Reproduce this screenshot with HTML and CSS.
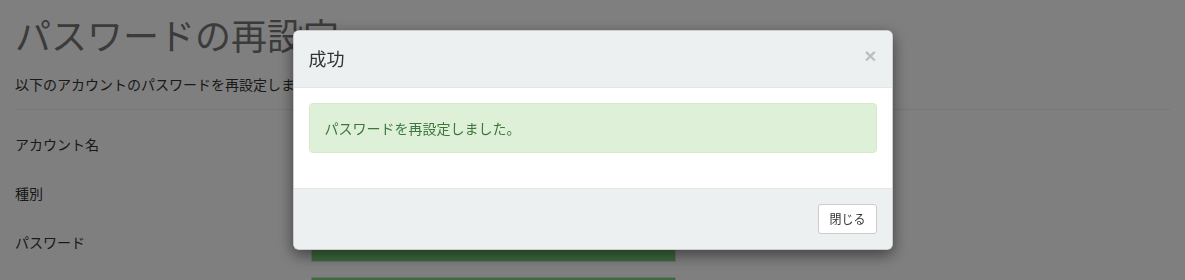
FILE: index.html
```html
<!DOCTYPE html>
<html lang="ja">
<head>
<meta charset="utf-8">
<title>パスワードの再設定</title>
<link rel="stylesheet" href="styles.css">
</head>
<body>
<div class="page">
  <h1 class="title">パスワードの再設定</h1>
  <p class="lead">以下のアカウントのパスワードを再設定しました。</p>
  <hr class="divider">
  <div class="form">
    <div class="label">アカウント名</div>
    <div class="value"></div>
    <div class="label">種別</div>
    <div class="value"></div>
    <div class="label">パスワード</div>
    <div class="value green"></div>
    <div class="label">&nbsp;</div>
    <div class="value green"></div>
  </div>
</div>

<div class="backdrop"></div>
<div class="modal">
  <div class="dialog">
    <div class="header">
      <h4 class="modal-title">成功</h4>
      <button class="close" type="button">×</button>
    </div>
    <div class="body">
      <div class="alert">パスワードを再設定しました。</div>
    </div>
    <div class="footer">
      <button class="btn" type="button">閉じる</button>
    </div>
  </div>
</div>
</body>
</html>
```
FILE: styles.css
```css
* { box-sizing: border-box; }
html, body {
  margin: 0;
  padding: 0;
  background: #fff;
  font-family: "Noto Sans CJK JP", "Noto Sans", sans-serif;
  font-size: 14px;
  line-height: 1.42857;
  color: #333;
}
.page {
  padding: 0 15px;
  height: 280px;
  overflow: hidden;
}
.title {
  margin: 15px 0 0;
  font-size: 36px;
  line-height: 1.1;
  font-weight: 400;
  color: #777;
}
.lead {
  margin: 19px 0 0;
}
.divider {
  margin: 15px 0 20px;
  border: 0;
  border-top: 1px solid #eee;
}
.form {
  display: grid;
  grid-template-columns: 281px 365px;
  column-gap: 15px;
  row-gap: 15px;
  grid-auto-rows: 34px;
}
.label {
  padding-top: 4px;
}
.value.green {
  background: #7bd47d;
  border: 1px solid #d8dfd8;
}
.backdrop {
  position: fixed;
  inset: 0;
  background: rgba(0, 0, 0, 0.5);
}
.modal {
  position: fixed;
  inset: 0;
}
.dialog {
  width: 600px;
  margin: 30px auto 0;
  background: #fff;
  border: 1px solid rgba(0, 0, 0, 0.2);
  border-radius: 6px;
  box-shadow: 0 5px 15px rgba(0, 0, 0, 0.5);
  overflow: hidden;
}
.header {
  display: flex;
  align-items: center;
  justify-content: space-between;
  padding: 15px;
  background: #ecf0f1;
  border-bottom: 1px solid #e5e5e5;
}
.modal-title {
  margin: 0;
  font-size: 18px;
  line-height: 1.42857;
  font-weight: 400;
  color: #333;
}
.close {
  border: 0;
  background: transparent;
  padding: 0;
  font-family: "Liberation Sans", Arial, sans-serif;
  font-size: 21px;
  font-weight: 700;
  line-height: 1;
  color: #000;
  opacity: 0.2;
  margin-top: -6px;
}
.body {
  padding: 15px;
}
.alert {
  margin-bottom: 20px;
  padding: 14px 15px;
  background: #dff0d8;
  border: 1px solid #d6e9c6;
  border-radius: 4px;
  color: #3c763d;
}
.footer {
  display: flex;
  justify-content: flex-end;
  padding: 15px;
  background: #ecf0f1;
  border-top: 1px solid #e5e5e5;
}
.btn {
  font-family: "Noto Sans CJK JP", sans-serif;
  font-size: 12px;
  line-height: 1.5;
  padding: 5px 10px;
  background: #fff;
  color: #333;
  border: 1px solid #ccc;
  border-radius: 3px;
}
```
